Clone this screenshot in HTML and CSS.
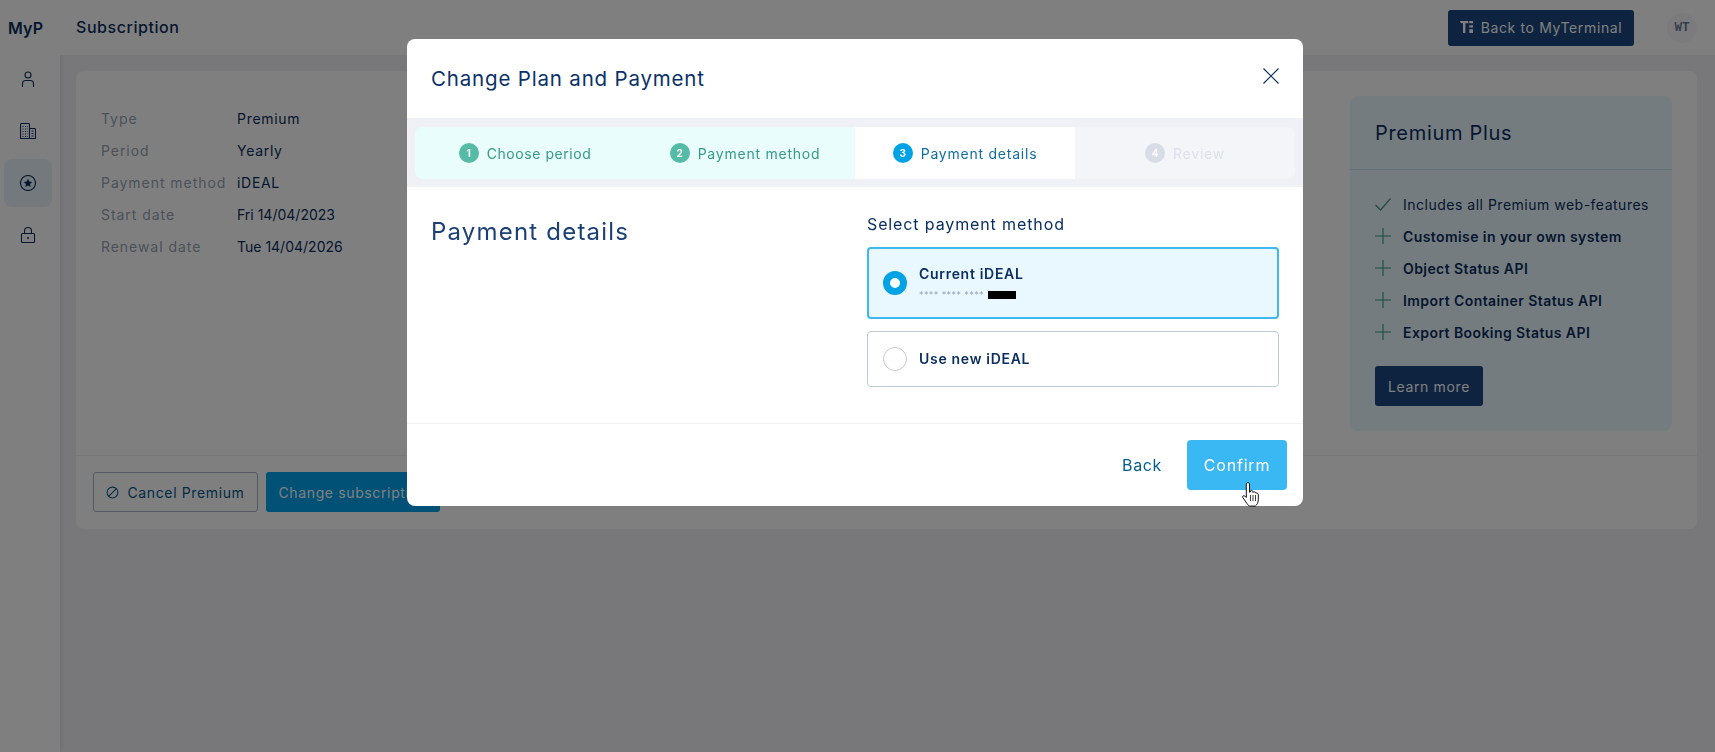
FILE: index.html
```html
<!DOCTYPE html>
<html lang="en">
<head>
<meta charset="utf-8">
<title>Subscription</title>
<link rel="stylesheet" href="styles.css">
</head>
<body>
<div class="app">
  <aside class="sidebar">
    <div class="logo">MyP</div>
    <nav class="nav">
      <div class="nav-item"><svg class="nav-icon" viewBox="0 0 16 16"><circle cx="8" cy="4" r="3"/><path d="M2.500 16V12.500a3 3 0 0 1 3-3h5a3 3 0 0 1 3 3V16"/></svg></div>
      <div class="nav-item"><svg class="nav-icon" viewBox="0 0 16 16"><path d="M.500 15.500V1.500a1 1 0 0 1 1-1h7a1 1 0 0 1 1 1v14zM9.500 5.500h5a1 1 0 0 1 1 1v9h-6zM2.500 3.500h1M5 3.500h1M7.200 3.500h.6M2.500 6h1M5 6h1M7.200 6h.6M2.500 8.500h1M5 8.500h1M7.200 8.500h.6M2.500 11h1M5 11h1M7.200 11h.6M2.500 13.500h1M5 13.500h1M7.200 13.500h.6M11.500 8h2M11.500 10.500h2M11.500 13h2"/></svg></div>
      <div class="nav-item nav-item-active"><svg class="nav-icon" viewBox="0 0 16 16"><circle cx="8" cy="8" r="7.500"/><path class="star" d="M8 3.800l1.250 2.800 3 .3-2.250 2 .65 3L8 10.400l-2.650 1.500.65-3-2.250-2 3-.3z"/></svg></div>
      <div class="nav-item"><svg class="nav-icon" viewBox="0 0 16 16"><rect x="1.500" y="6.500" width="13" height="9" rx="1"/><path d="M4.500 6.500V4a3.500 3.500 0 0 1 7 0v2.500"/><circle class="star" cx="8" cy="11" r="1"/></svg></div>
    </nav>
  </aside>
  <div class="main">
    <header class="topbar">
      <h1 class="page-title">Subscription</h1>
      <div class="topbar-actions">
        <button class="btn btn-navy btn-back"><svg class="terminal-icon" viewBox="0 0 14 14"><path d="M0 0h9v2.500H5.800V13H3.200V2.500H1.500L0 1zM10 0h4v2.500h-4zM10 4.500h4V7h-4zM10 9h4v4h-4z"/></svg>Back to MyTerminal</button>
        <div class="avatar">WT</div>
      </div>
    </header>
    <section class="card">
      <div class="card-body">
        <dl class="details">
          <dt>Type</dt><dd>Premium</dd>
          <dt>Period</dt><dd>Yearly</dd>
          <dt>Payment method</dt><dd>iDEAL</dd>
          <dt>Start date</dt><dd class="date">Fri 14/04/2023</dd>
          <dt>Renewal date</dt><dd class="date">Tue 14/04/2026</dd>
        </dl>
        <aside class="plan">
          <h2 class="plan-title">Premium Plus</h2>
          <div class="plan-body">
            <ul class="features">
              <li class="feature feature-base"><svg class="feature-icon" viewBox="0 0 16 16"><path d="M.500 9l5 5L15.500 2.500"/></svg>Includes all Premium web-features</li>
              <li class="feature"><svg class="feature-icon" viewBox="0 0 16 16"><path d="M8 0v16M0 8h16"/></svg>Customise in your own system</li>
              <li class="feature"><svg class="feature-icon" viewBox="0 0 16 16"><path d="M8 0v16M0 8h16"/></svg>Object Status API</li>
              <li class="feature"><svg class="feature-icon" viewBox="0 0 16 16"><path d="M8 0v16M0 8h16"/></svg>Import Container Status API</li>
              <li class="feature"><svg class="feature-icon" viewBox="0 0 16 16"><path d="M8 0v16M0 8h16"/></svg>Export Booking Status API</li>
            </ul>
            <button class="btn btn-navy btn-learn">Learn more</button>
          </div>
        </aside>
      </div>
      <footer class="card-footer">
        <button class="btn btn-outline"><svg class="cancel-icon" viewBox="0 0 14 14"><circle cx="7" cy="7" r="5.800"/><path d="M3 11L11 3"/></svg>Cancel Premium</button>
        <button class="btn btn-blue">Change subscription</button>
      </footer>
    </section>
  </div>
</div>

<div class="overlay">
  <div class="modal">
    <div class="modal-head">
      <h2 class="modal-title">Change Plan and Payment</h2>
      <svg class="close" viewBox="0 0 16 16"><path d="M.500.500l15 15M15.500.500l-15 15"/></svg>
    </div>
    <div class="stepper">
      <div class="steps">
        <div class="step step-done step-first"><span class="step-num">1</span>Choose period</div>
        <div class="step step-done"><span class="step-num">2</span>Payment method</div>
        <div class="step step-current"><span class="step-num">3</span>Payment details</div>
        <div class="step step-next"><span class="step-num">4</span>Review</div>
      </div>
    </div>
    <div class="modal-body">
      <h3 class="section-title">Payment details</h3>
      <div class="method-col">
        <div class="method-label">Select payment method</div>
        <div class="option option-selected">
          <span class="radio radio-on"></span>
          <div>
            <div class="option-name">Current iDEAL</div>
            <div class="option-sub">**** **** **** <span class="redacted"></span></div>
          </div>
        </div>
        <div class="option">
          <span class="radio"></span>
          <div class="option-name">Use new iDEAL</div>
        </div>
      </div>
    </div>
    <div class="modal-foot">
      <button class="btn-text">Back</button>
      <button class="btn-confirm">Confirm</button>
    </div>
  </div>
  <svg class="cursor" viewBox="0 0 18 25"><path d="M6 .700c1 0 1.500.7 1.500 1.500v8l1-.3V8.800c1-.8 2-.5 2.300.5v1l1-.2c1-.5 1.900 0 2 1l1-.1c1 0 1.500.8 1.500 1.800v5c0 2.500-1.200 5-3 6.300H8.500c-1.500 0-2.500-1-3.500-2.500L.8 15.500c-.8-1.200 1-2.500 2-1.500L4.300 15.500V2.200c0-.8.700-1.500 1.700-1.500z"/><path class="cursor-line" d="M8.500 13v6M11 13v6M13.500 13v6"/></svg>
</div>
</body>
</html>
```

FILE: styles.css
```css
* { box-sizing: border-box; }
html, body { margin: 0; height: 100%; }
body {
  font-family: "Inter", "Liberation Sans", sans-serif;
  font-size: 14px;
  letter-spacing: .03em;
  color: #0b2f60;
  background: #f0f1f5;
  overflow: hidden;
}
h1, h2, h3, dl, dd, ul { margin: 0; padding: 0; font-weight: 500; }
button { font: inherit; letter-spacing: inherit; border: 0; cursor: pointer; }

.app { display: flex; height: 752px; }

/* Sidebar */
.sidebar { width: 60px; flex: none; background: #fff; padding: 0 4px; box-shadow: 1px 0 6px rgba(0,0,0,.08); }
.logo { height: 55px; margin-left: 4px; display: flex; align-items: center; font-size: 16px; font-weight: 600; letter-spacing: .01em; color: #0b2f60; }
.nav { display: flex; flex-direction: column; gap: 4px; }
.nav-item { width: 48px; height: 48px; border-radius: 8px; display: flex; align-items: center; justify-content: center; }
.nav-item-active { background: #e6f2fa; }
.nav-icon { width: 16px; height: 16px; fill: none; stroke: #0b2f60; stroke-width: 1.100; }
.star { fill: #0b2f60; stroke: none; }

/* Main */
.main { flex: 1; min-width: 0; }
.topbar { height: 55px; background: #fff; display: flex; align-items: center; justify-content: space-between; padding: 0 18px 0 16px; }
.page-title { font-size: 16px; color: #0b2f60; letter-spacing: .035em; padding-bottom: 1px; }
.topbar-actions { display: flex; align-items: center; gap: 33px; }
.avatar { width: 30px; height: 30px; border-radius: 50%; background: #f6f7fa; display: flex; align-items: center; justify-content: center; font-family: "Liberation Mono", monospace; font-size: 12.500px; font-weight: 700; letter-spacing: 0; color: #6d7fa0; }

.btn { display: inline-flex; align-items: center; justify-content: center; border-radius: 3px; font-size: 14px; font-weight: 400; letter-spacing: .045em; }
.btn-navy { background: #1a4680; color: #fff; }
.btn-back { width: 186px; height: 36px; gap: 8px; }
.terminal-icon { width: 13px; height: 13px; fill: #fff; }

.card { margin: 16px 18px 0 16px; height: 458px; background: #fff; border-radius: 8px; display: flex; flex-direction: column; }
.card-body { flex: 1; display: flex; justify-content: space-between; padding: 25px 25px 24px 25px; }
.details { display: grid; grid-template-columns: 136px auto; grid-auto-rows: 32px; align-items: center; align-content: start; margin-top: 6px; }
.details dt { color: #98a2b3; font-weight: 400; letter-spacing: .068em; white-space: nowrap; }
.details dd { color: #0b2f60; font-weight: 400; letter-spacing: .05em; }
.details .date { letter-spacing: 0; }

.plan { width: 322px; background: #eaf9ff; border-radius: 8px; }
.plan-title { height: 74px; padding: 0 25px; display: flex; align-items: center; font-size: 20px; letter-spacing: .035em; font-weight: 400; color: #0b2f60; border-bottom: 1px solid #bfe5f7; }
.plan-body { padding: 18px 25px 0; }
.features { list-style: none; margin-bottom: 18px; }
.feature { height: 32px; display: flex; align-items: center; gap: 12px; font-weight: 600; color: #0b2f60; white-space: nowrap; }
.feature-base { font-weight: 400; letter-spacing: .036em; }
.feature-icon { width: 16px; height: 16px; flex: none; fill: none; stroke: #3f9d82; stroke-width: 1.200; }
.btn-learn { width: 108px; height: 40px; }

.card-footer { height: 74px; border-top: 1px solid #eef0f4; padding: 16px 17px; display: flex; gap: 8px; }
.btn-outline { width: 165px; height: 40px; gap: 8px; background: #fff; border: 1px solid #aab4c4; color: #00598c; }
.cancel-icon { width: 13px; height: 13px; fill: none; stroke: #00598c; stroke-width: 1.100; }
.btn-blue { width: 174px; height: 40px; background: #00a2ea; color: #fff; }

/* Overlay and modal */
.overlay { position: fixed; inset: 0; background: rgba(0,0,0,.5); padding: 39px 0 0 407px; }
.modal { width: 896px; height: 467px; background: #fff; border-radius: 8px; display: flex; flex-direction: column; }
.modal-head { height: 79px; flex: none; display: flex; justify-content: space-between; padding: 28px 24px 0; }
.modal-title { font-size: 20.500px; line-height: 24px; color: #0b3268; font-weight: 400; letter-spacing: .04em; }
.close { width: 16px; height: 16px; fill: none; stroke: #0b3268; stroke-width: 1.200; margin-top: 1px; }

.stepper { height: 69px; flex: none; background: #eff1f6; padding: 9px 8px 8px; }
.steps { height: 52px; display: grid; grid-template-columns: repeat(4, 220px); }
.step { display: flex; align-items: center; justify-content: center; gap: 8px; font-weight: 400; letter-spacing: .055em; }
.step-first { border-radius: 8px 0 0 8px; letter-spacing: .04em; }
.step-done { background: #e8fdfc; color: #359a86; }
.step-current { background: #fff; color: #0f6f9f; }
.step-next { background: #f4f5f9; color: #dde1e9; border-radius: 0 8px 8px 0; }
.step-num { width: 20px; height: 20px; border-radius: 50%; display: flex; align-items: center; justify-content: center; font-size: 10px; font-weight: 700; letter-spacing: 0; color: #fff; }
.step-done .step-num { background: #56bba6; }
.step-current .step-num { background: #00a2e6; }
.step-next .step-num { background: #d8dce6; }

.modal-body { flex: 1; display: flex; padding: 26px 24px 0; justify-content: space-between; }
.section-title { font-size: 24px; line-height: 38px; color: #1b4076; font-weight: 400; letter-spacing: .05em; }
.method-col { width: 412px; display: flex; flex-direction: column; }
.method-label { font-size: 16px; line-height: 20px; color: #0b2f60; margin-bottom: 13px; font-weight: 400; letter-spacing: .055em; padding-top: 1px; }
.option { height: 56px; border: 1px solid #bfc8d6; border-radius: 4px; display: flex; align-items: center; gap: 12px; padding-left: 15px; margin-bottom: 12px; }
.option-selected { height: 72px; border: 2px solid #3db8f0; background: #e9f8ff; padding-left: 14px; }
.radio { width: 24px; height: 24px; flex: none; border-radius: 50%; border: 1px solid #c4cad6; background: #fff; }
.radio-on { border: 7px solid #00a2e6; }
.option-name { font-size: 14px; line-height: 18px; font-weight: 600; color: #0b2f60; letter-spacing: .05em; }
.option-sub { display: flex; gap: 4px; align-items: center; font-size: 9px; line-height: 12px; color: #98a2b8; margin-top: 6px; }
.redacted { width: 28px; height: 8px; background: #000; }

.modal-foot { height: 83px; flex: none; border-top: 1px solid #f0f1f4; display: flex; align-items: flex-start; justify-content: flex-end; gap: 25px; padding: 16px 16px 0; }
.btn-text { height: 50px; padding: 0; background: none; color: #005f8f; font-size: 16px; font-weight: 400; letter-spacing: .04em; }
.btn-confirm { width: 100px; height: 50px; border-radius: 4px; background: #3ab8f4; color: #fff; font-size: 16px; font-weight: 400; letter-spacing: .05em; }

.cursor { position: absolute; left: 1242px; top: 482px; width: 18px; height: 25px; fill: #fff; stroke: #111; stroke-width: 1; }
.cursor-line { fill: none; stroke-width: .8; }
```
